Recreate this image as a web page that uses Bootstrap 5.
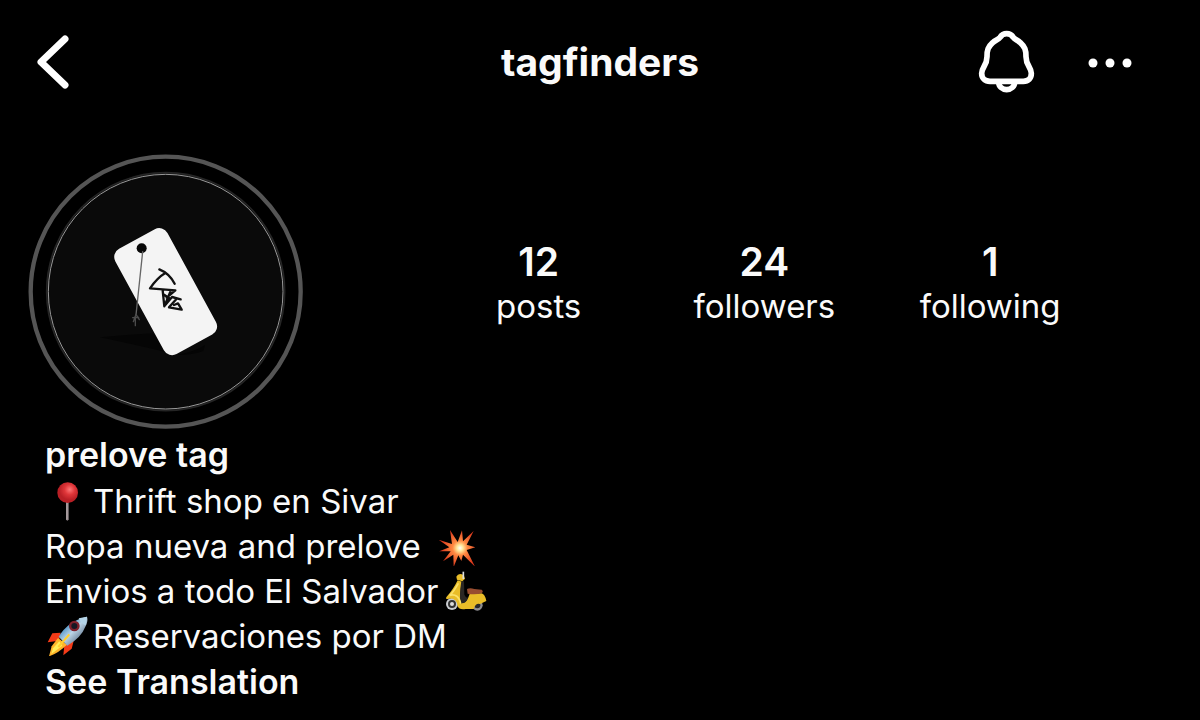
<!DOCTYPE html>
<html lang="es">
<head>
<meta charset="utf-8">
<meta name="viewport" content="width=device-width, initial-scale=1">
<title>tagfinders</title>
<link rel="stylesheet" href="https://cdn.jsdelivr.net/npm/bootstrap@5.3.0/dist/css/bootstrap.min.css">
<style>
  body { background: #000; color: #fafafa; font-family: Inter, "Liberation Sans", sans-serif; font-size: 33px; line-height: 45px; }
  svg { display: block; flex: none; }
  .topbar { display: grid; grid-template-columns: 1fr auto 1fr; height: 124px; padding: 0 36px; }
  .topbar h1 { font-size: 39px; line-height: 48px; }
  .topbar .actions { gap: 52px; padding-right: 29px; }
  .icon-btn { color: #fff; background: none; border: 0; padding: 0; }
  .profile { padding: 30px 97px 0 28px; }
  .stats { display: grid; grid-template-columns: repeat(3, 1fr); width: 63%; padding-bottom: 16px; }
  .stats a { color: inherit; text-decoration: none; }
  .stats .count { font-size: 39px; line-height: 44px; }
  .bio { padding: 2px 45px 0; }
  .bio h2 { font-size: 34px; line-height: 45px; margin-bottom: 2px; }
  .bio p svg { display: inline-block; vertical-align: -8px; }
  .translate-btn { color: inherit; background: none; border: 0; padding: 0; font-size: 34px; }
</style>
</head>
<body>
<header class="topbar align-items-center">
  <button class="icon-btn me-auto" type="button" aria-label="Back">
    <svg width="34" height="56" viewBox="0 0 34 56" fill="none" stroke="currentColor" stroke-width="7" stroke-linecap="round" stroke-linejoin="round"><path d="M29 5 5 28 29 51"/></svg>
  </button>
  <h1 class="m-0 fw-bold">tagfinders</h1>
  <div class="actions d-flex align-items-center ms-auto">
    <button class="icon-btn" type="button" aria-label="Notifications">
      <svg width="58" height="64" viewBox="51 30 174 192" fill="none" stroke="currentColor" stroke-width="17" stroke-linejoin="round"><path d="M140 41C130 41 124 46 120 52C115 59 106 60 98 68C84 81 81 90 81 110C81 137 65 142 65 160C65 175 75 184 90 184H190C205 184 214 175 214 160C214 142 198 137 198 110C198 90 195 81 181 68C173 60 165 59 160 52C156 46 150 41 140 41Z"/><path d="M116 187A24 22 0 0 0 164 187"/></svg>
    </button>
    <button class="icon-btn" type="button" aria-label="More options">
      <svg width="48" height="12" viewBox="0 0 48 12" fill="currentColor"><circle cx="6" cy="7" r="4.500"/><circle cx="23" cy="7" r="4.500"/><circle cx="40" cy="7" r="4.500"/></svg>
    </button>
  </div>
</header>
<main>
  <section class="profile d-flex justify-content-between align-items-center">
    <svg width="276" height="276" viewBox="24 27 828 828" role="img" aria-label="Profile photo">
      <circle cx="437" cy="440" r="405" fill="#000" stroke="#555" stroke-width="13"/>
      <circle cx="437" cy="440" r="357" fill="#0a0a0a" stroke="#252525" stroke-width="5"/>
      <circle cx="437" cy="440" r="352" fill="none" stroke="#999" stroke-width="3"/>
      <path d="M240 577Q320 570 400 565L440 622Q350 600 240 577M470 630Q530 618 555 600L550 618Q520 630 470 630" fill="#050505"/>
      <rect x="348" y="260" width="178" height="360" rx="28" fill="#f4f4f4" transform="rotate(-28.600 437 440)"/>
      <circle cx="365" cy="310" r="15" fill="#080808"/>
      <g fill="none" stroke-linecap="round" stroke-linejoin="round">
        <path d="M368 320 348 510" stroke="#666" stroke-width="4"/>
        <path d="M348 508 340 530M348 508 358 524M338 518 356 517M346 515V542" stroke="#4b4b4b" stroke-width="4"/>
        <path d="M418 373Q448 385 464 416M436 384Q412 398 390 430L466 436L440 458M428 436L433 484L451 440M430 448L448 460M482 463L456 456L434 482M470 461L447 487L485 494L474 475L462 480" stroke="#111" stroke-width="7"/>
      </g>
    </svg>
    <nav class="stats text-center" aria-label="Profile statistics">
      <a href="#posts"><span class="count d-block fw-semibold">12</span><span class="d-block">posts</span></a>
      <a href="#followers"><span class="count d-block fw-semibold">24</span><span class="d-block">followers</span></a>
      <a href="#following"><span class="count d-block fw-semibold">1</span><span class="d-block">following</span></a>
    </nav>
  </section>
  <section class="bio">
    <h2 class="fw-semibold">prelove tag</h2>
    <p class="m-0"><svg width="48" height="40" viewBox="18 15 144 120" role="img" aria-label="Pin">
        <defs><radialGradient id="pin" cx=".6" cy=".35"><stop stop-color="#f77"/><stop offset=".5" stop-color="#df3639"/><stop offset="1" stop-color="#b91f25"/></radialGradient></defs>
        <path d="M81 75H89V130Q85 138 81 130Z" fill="#92868a"/><path d="M84 80V130" stroke="#c9bec0" stroke-width="2"/><circle cx="86" cy="50" r="31" fill="url(#pin)"/></svg>Thrift shop en Sivar</p>
    <p class="m-0">Ropa nueva and prelove <svg class="ms-1" width="48" height="40" viewBox="12 12 144 120" role="img" aria-label="Collision">
        <defs><radialGradient id="boom" gradientUnits="userSpaceOnUse" cx="90" cy="78" r="58"><stop stop-color="#fff"/><stop offset=".16" stop-color="#ffe79a"/><stop offset=".38" stop-color="#ff8a42"/><stop offset="1" stop-color="#d9341a"/></radialGradient></defs>
        <path d="M60 24 83 60 96 25 99 58 131 27 110 68 136 76 110 84 135 134 99 98 94 117 85 100 71 135 70 98 39 118 62 88 28 88 58 76 26 53 66 66Z" fill="url(#boom)"/></svg></p>
    <p class="m-0">Envios a todo El Salvador<svg class="ms-1" width="48" height="40" viewBox="42 153 144 120" role="img" aria-label="Scooter">
        <circle cx="69" cy="252" r="18" fill="#c9ccd0"/><circle cx="69" cy="252" r="12" fill="#333"/><circle cx="69" cy="252" r="6" fill="#ddd"/>
        <circle cx="145" cy="256" r="16" fill="#8d8d90"/><circle cx="145" cy="256" r="9" fill="#292929"/>
        <path d="M86 181Q72 210 53 230Q48 237 56 237Q82 230 86 259Q90 270 110 267H134Q140 248 153 252L172 243Q168 222 157 220L122 222Q113 251 96 250Q90 226 99 185Z" fill="#e9bd28"/>
        <path d="M97 184H105L106 224Q113 238 118 230Q113 251 96 250Q90 226 97 184Z" fill="#2a2724"/>
        <path d="M88 190Q73 217 62 226Q88 219 95 251" fill="none" stroke="#fbe16a" stroke-width="5"/>
        <path d="M82 170Q88 157 104 165L108 176L100 184L84 179Z" fill="#e9bd28"/><path d="M103 155V177" stroke="#ddd" stroke-width="5"/><path d="M114 207Q123 202 136 207L158 209Q165 215 157 220Q138 225 116 221Z" fill="#984d30"/></svg></p>
    <p class="m-0"><svg width="48" height="40" viewBox="18 15 144 120" role="img" aria-label="Rocket">
        <defs><linearGradient id="hull" x1="0" y1="0" x2="1" y2="1"><stop offset=".2" stop-color="#277dbc"/><stop offset=".5" stop-color="#bdd5e7"/><stop offset=".8" stop-color="#60758d"/></linearGradient></defs>
        <path d="M65 65 40 67 26 94 60 89ZM76 103 104 90 98 113 73 133Z" fill="#f43b18"/>
        <path d="M57 81 38 106 30 136Q58 126 84 101Z" fill="#ffb32a"/><path d="M61 91 42 112 37 129 70 104Z" fill="#ffed58"/>
        <path d="M59 77Q88 29 144 17Q148 30 140 45Q127 80 85 104Z" fill="url(#hull)"/><path d="M119 22 144 17 140 43Q128 40 119 22Z" fill="#b4d4e7"/>
        <circle cx="106" cy="45" r="16" fill="#801f2b"/><circle cx="106" cy="45" r="9" fill="#171724"/><path d="M91 70 58 108" stroke="#ffd02d" stroke-width="6"/></svg>Reservaciones por DM</p>
    <button class="translate-btn d-block fw-semibold" type="button">See Translation</button>
  </section>
</main>
<script src="https://cdn.jsdelivr.net/npm/bootstrap@5.3.0/dist/js/bootstrap.bundle.min.js"></script>
</body>
</html>
